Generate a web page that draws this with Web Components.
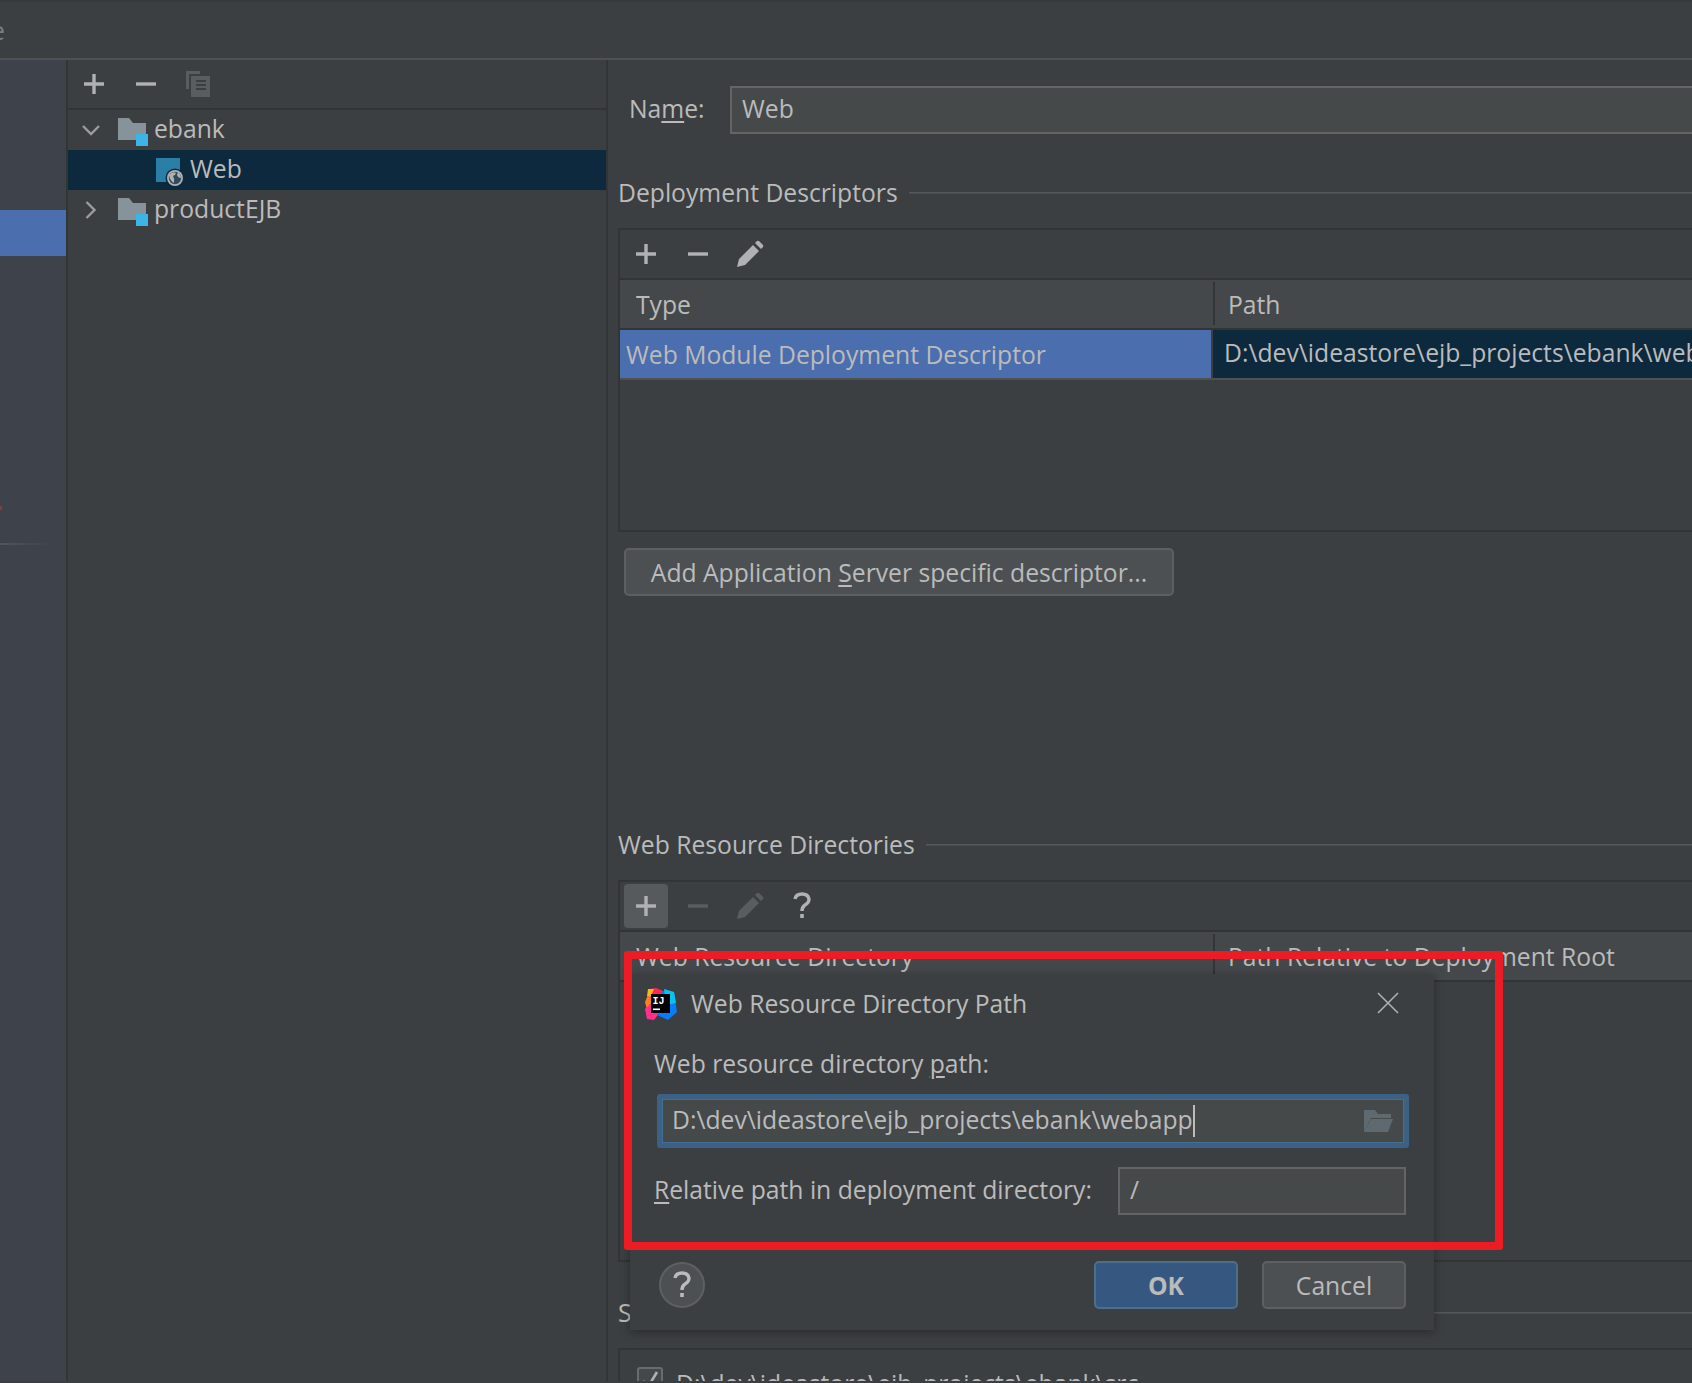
<!DOCTYPE html>
<html>
<head>
<meta charset="utf-8">
<title>Project Structure</title>
<style>
html,body{margin:0;padding:0;background:#3c3f41;}
body{font-family:"Open Sans","Noto Sans",sans-serif;font-size:24.7px;color:#bbbbbb;}
u{text-underline-offset:3px;text-decoration-thickness:2px;}
</style>
</head>
<body>

<ide-window>
  <span slot="title">e</span>

  <tree-panel slot="tree">
    <tool-bar slot="tools">
      <icon-btn name="plus"></icon-btn>
      <icon-btn name="minus"></icon-btn>
      <icon-btn name="copy"></icon-btn>
    </tool-bar>
    <tree-row arrow="down" icon="module">ebank</tree-row>
    <tree-row icon="web" level="1" selected>Web</tree-row>
    <tree-row arrow="right" icon="module">productEJB</tree-row>
  </tree-panel>

  <div slot="main">
    <name-row><span slot="label">Na<u>m</u>e:</span>Web</name-row>

    <group-title style="margin-top:43px">Deployment Descriptors</group-title>
    <data-panel style="margin-top:21px;height:304px">
      <tool-bar slot="tools">
        <icon-btn name="plus"></icon-btn>
        <icon-btn name="minus"></icon-btn>
        <icon-btn name="pencil"></icon-btn>
      </tool-bar>
      <table-head><span slot="a">Type</span><span slot="b">Path</span></table-head>
      <table-row><span slot="a">Web Module Deployment Descriptor</span><span slot="b">D:\dev\ideastore\ejb_projects\ebank\web</span></table-row>
    </data-panel>
    <ide-button style="margin:16px 0 0 6px;width:550px">Add Application <u>S</u>erver specific descriptor...</ide-button>

    <group-title style="margin-top:233px">Web Resource Directories</group-title>
    <data-panel style="margin-top:21px;height:382px">
      <tool-bar slot="tools">
        <icon-btn name="plus" active></icon-btn>
        <icon-btn name="minus" disabled></icon-btn>
        <icon-btn name="pencil" disabled></icon-btn>
        <icon-btn name="help"></icon-btn>
      </tool-bar>
      <table-head><span slot="a">Web Resource Directory</span><span slot="b">Path Relative to Deployment Root</span></table-head>
    </data-panel>

    <group-title style="margin-top:35px">Source Roots</group-title>
    <data-panel style="margin-top:21px;height:80px">
      <check-row>D:\dev\ideastore\ejb_projects\ebank\src</check-row>
    </data-panel>
  </div>

  <dialog-box slot="overlay">
    <span slot="title">Web Resource Directory Path</span>
    <field-label>Web resource directory <u>p</u>ath:</field-label>
    <path-field>D:\dev\ideastore\ejb_projects\ebank\webapp</path-field>
    <relative-row><span slot="label"><u>R</u>elative path in deployment directory:</span>/</relative-row>
    <ide-button slot="footer" primary style="width:144px">OK</ide-button>
    <ide-button slot="footer" style="width:144px">Cancel</ide-button>
  </dialog-box>

  <red-mark slot="overlay"></red-mark>
</ide-window>

<script>
// all the icons in one place
const ICONS = {
  plus: '<svg width="24" height="24" viewBox="0 0 24 24"><path d="M12 2v20M2 12h20" stroke="currentColor" stroke-width="3.4" fill="none"/></svg>',
  minus: '<svg width="24" height="24" viewBox="0 0 24 24"><path d="M2 12h20" stroke="currentColor" stroke-width="3.4" fill="none"/></svg>',
  copy: '<svg width="26" height="28" viewBox="0 0 26 28"><path d="M1 1h14v3H4v15H1z" fill="#5a5d5f"/><path d="M6 6h19v21H6z" fill="#5a5d5f"/><path d="M11 11h10M11 15h10M11 19h10" stroke="#3c3f41" stroke-width="2"/></svg>',
  pencil: '<svg width="28" height="28" viewBox="0 0 28 28"><path d="M1 27l2-8L17 5l6 6L9 25zM19 3l2-2q1-.5 2 0l4 4q.5 1 0 2l-2 2z" fill="currentColor"/></svg>',
  help: '<svg width="24" height="30" viewBox="0 0 24 30"><path d="M5 8q1-5 7-5t7 5q0 4-4 6-3 2-3 6" stroke="currentColor" stroke-width="3.4" fill="none"/><rect x="10.2" y="23" width="3.6" height="4" fill="currentColor"/></svg>',
  down: '<svg width="20" height="20" viewBox="0 0 20 20"><path d="M2 6l8 8 8-8" stroke="#9a9c9e" stroke-width="2.4" fill="none"/></svg>',
  right: '<svg width="20" height="20" viewBox="0 0 20 20"><path d="M5.5 2l8 8-8 8" stroke="#9a9c9e" stroke-width="2.4" fill="none"/></svg>',
  module: '<svg width="31" height="29" viewBox="0 0 31 29"><path d="M0 0h11l4 5h13v17H18v6H0z" fill="#87939a"/><rect x="0" y="22" width="18" height="7" fill="var(--row-bg,#3c3f41)"/><rect x="18" y="16" width="12" height="12" fill="#3cb4e7"/></svg>',
  web: '<svg width="31" height="30" viewBox="0 0 31 30"><rect x="1" y="0" width="24" height="24" fill="#2b7ea5"/><circle cx="20" cy="20" r="9.5" fill="#0d293e"/><circle cx="20" cy="20" r="8" fill="#afb1b3"/><circle cx="20" cy="20" r="6.2" fill="#2f4a5e"/><path d="M14 17q4-4 7-2-1 3-3 3 2 3 1 7-4-2-5-8zM23 14q3 2 3 6-3 0-4-3z" fill="#afb1b3"/></svg>',
  logo: '<svg width="33" height="33" viewBox="0 0 33 33"><path d="M1 14L6 2l8 1-2 14-9 5z" fill="#fc801d"/><path d="M6 1l6-1 7 3-1 9L7 12z" fill="#fe2857"/><path d="M4 1l6 0-3 7-4 0z" fill="#fdb60d"/><path d="M1 21l6-6 9 9-6 8-7-1z" fill="#ff318c"/><path d="M18 3l12 1 3 20-9 8-11-5z" fill="#087cfa"/><path d="M20 1l10 3 2 11-10 2z" fill="#07c3f2"/><rect x="7" y="6" width="19" height="19" fill="#000"/><text x="8.5" y="16" font-family="Liberation Mono,monospace" font-size="10" font-weight="700" fill="#fff">IJ</text><rect x="9" y="20.5" width="7" height="1.6" fill="#fff"/></svg>',
  folder: '<svg width="31" height="24" viewBox="0 0 31 24"><path d="M1 23V1h11l3 4h13v4H8z" fill="#5e6a70"/><path d="M8 10h22l-5 13H1z" fill="#5e6a70"/></svg>',
  close: '<svg width="22" height="22" viewBox="0 0 22 22"><path d="M1 1l20 20M21 1L1 21" stroke="#aeb0b2" stroke-width="1.6" fill="none"/></svg>',
  check: '<svg width="20" height="20" viewBox="0 0 20 20"><path d="M3 11l5 6L17 2" stroke="#afb1b3" stroke-width="2.6" fill="none"/></svg>'
};

// small helper so the classes stay short
function define(tag, html, extra) {
  const template = document.createElement('template');
  template.innerHTML = html;
  class Base extends HTMLElement {
    constructor() {
      super();
      this.attachShadow({ mode: 'open' });
      this.shadowRoot.appendChild(template.content.cloneNode(true));
    }
    connectedCallback() {
      if (extra) extra.call(this);
    }
  }
  customElements.define(tag, Base);
}

define('ide-window', `
<style>
:host{display:block;position:relative;width:1692px;height:1383px;overflow:hidden;background:#3c3f41;}
.top{height:56px;border-top:2px solid #36383a;border-bottom:2px solid #4e5052;box-sizing:content-box;display:flex;align-items:center;color:#7c7e80;}
.top ::slotted(*){margin-left:-9px;}
.cols{display:grid;grid-template-columns:66px 2px 538px 2px 1fr;height:1321px;}
.side{background:#3e434b;position:relative;}
.side .sel{margin-top:150px;height:46px;background:#4b6eaf;}
.side .dot{position:absolute;left:0;top:446px;width:2px;height:4px;background:#8a3a40;}
.side .tick{margin-top:287px;width:50px;height:2px;background:linear-gradient(90deg,#54555a,#3e434b);}
.line{background:#323436;}
.main{padding-left:10px;min-width:0;overflow:hidden;}
</style>
<div class="top"><slot name="title"></slot></div>
<div class="cols">
  <div class="side"><div class="sel"></div><div class="dot"></div><div class="tick"></div></div>
  <div class="line"></div>
  <div><slot name="tree"></slot></div>
  <div class="line"></div>
  <div class="main"><slot name="main"></slot></div>
</div>
<slot name="overlay"></slot>
`);

define('tool-bar', `
<style>
:host{display:flex;align-items:center;gap:8px;height:48px;padding-left:4px;}
</style>
<slot></slot>
`);

define('icon-btn', `
<style>
:host{display:flex;align-items:center;justify-content:center;width:44px;height:44px;border-radius:4px;color:#afb1b3;}
:host([active]){background:#565a5d;}
:host([disabled]){color:#5a5d5f;}
</style>
<span id="i" style="display:flex"></span>
`, function () {
  this.shadowRoot.getElementById('i').innerHTML = ICONS[this.getAttribute('name')];
});

define('tree-panel', `
<style>
:host{display:block;}
.t{border-bottom:2px solid #323436;}
</style>
<div class="t"><slot name="tools"></slot></div>
<slot></slot>
`);

define('tree-row', `
<style>
:host{display:flex;align-items:center;height:40px;color:#bbb;}
:host([selected]){background:#0d293e;--row-bg:#0d293e;}
.arrow{width:20px;height:20px;margin-left:13px;margin-right:17px;flex:none;display:flex;}
.icon{display:flex;flex:none;margin:5px 5px 0 0;}
.txt{margin-bottom:3px;white-space:nowrap;}
:host([level]) .arrow{margin-right:54px;}
:host([level]) .icon{margin-right:4px;}
</style>
<span class="arrow" id="a"></span><span class="icon" id="i"></span><span class="txt"><slot></slot></span>
`, function () {
  const arrow = this.getAttribute('arrow');
  if (arrow) this.shadowRoot.getElementById('a').innerHTML = ICONS[arrow];
  this.shadowRoot.getElementById('i').innerHTML = ICONS[this.getAttribute('icon')];
});

define('name-row', `
<style>
:host{display:flex;align-items:center;margin:26px -20px 0 11px;height:48px;}
.l{width:101px;flex:none;padding-bottom:4px;}
.f{flex:1;background:#45494a;border:2px solid #646464;display:flex;align-items:center;padding:0 0 4px 10px;box-sizing:content-box;height:40px;}
</style>
<span class="l"><slot name="label"></slot></span>
<div class="f"><slot></slot></div>
`);

define('group-title', `
<style>
:host{display:flex;align-items:center;height:30px;white-space:nowrap;}
i{flex:1;height:1px;background:#55585a;margin:2px 0 0 11px;border-bottom:1px solid #4a4c4e;}
</style>
<slot></slot><i></i>
`);

define('data-panel', `
<style>
:host{display:block;box-sizing:border-box;border:2px solid #323436;border-right:0;overflow:hidden;}
.t{border-bottom:2px solid #323436;}
.t.none{display:none;}
</style>
<div class="t" id="t"><slot name="tools"></slot></div>
<slot></slot>
`, function () {
  if (!this.querySelector('[slot=tools]')) this.shadowRoot.getElementById('t').className = 't none';
});

define('table-head', `
<style>
:host{display:grid;grid-template-columns:593px 1fr;height:48px;background:#45484a;border-bottom:2px solid #323436;}
div{display:flex;align-items:center;padding-left:16px;white-space:nowrap;}
.b{position:relative;padding-left:15px;}
.b::before{content:"";position:absolute;left:0;top:2px;bottom:3px;width:2px;background:#323436;}
</style>
<div><slot name="a"></slot></div>
<div class="b"><slot name="b"></slot></div>
`);

define('table-row', `
<style>
:host{display:grid;grid-template-columns:591px 2px 1fr;height:48px;border-bottom:2px solid #4e5052;}
.a{background:#4b6eaf;display:flex;align-items:center;padding-left:6px;white-space:nowrap;}
.gap{background:#3c3f41;}
.b{background:#0d293e;display:flex;align-items:center;padding-left:11px;padding-bottom:4px;white-space:nowrap;overflow:hidden;}
</style>
<div class="a"><slot name="a"></slot></div><div class="gap"></div>
<div class="b"><slot name="b"></slot></div>
`);

define('ide-button', `
<style>
:host{display:flex;align-items:center;justify-content:center;box-sizing:border-box;height:48px;border:2px solid #5e6060;border-radius:5px;background:#4c5052;white-space:nowrap;}
:host([primary]){background:#365880;border-color:#4c708c;font-weight:700;}
</style>
<span><slot></slot></span>
`);

define('check-row', `
<style>
:host{display:flex;align-items:flex-start;padding:17px 0 0 17px;}
.box{width:22px;height:22px;border:2px solid #6b6b6b;border-radius:3px;background:#43494a;margin-right:13px;flex:none;display:flex;align-items:center;justify-content:center;}
span{line-height:34px;white-space:nowrap;}
</style>
<div class="box" id="b"></div><span><slot></slot></span>
`, function () {
  this.shadowRoot.getElementById('b').innerHTML = ICONS.check;
});

define('dialog-box', `
<style>
:host{position:absolute;left:630px;top:974px;width:804px;height:356px;background:#3c3f41;box-shadow:0 2px 9px rgba(0,0,0,.35);display:flex;flex-direction:column;}
.head{display:flex;align-items:center;height:60px;padding:0 35px 0 14px;flex:none;}
.logo{display:flex;margin-right:14px;}
.head .t{flex:1;padding-bottom:2px;}
.x{display:flex;margin-bottom:2px;}
.body{padding:0 28px 0 24px;flex:1;}
.foot{display:flex;align-items:center;gap:24px;padding:0 28px 21px 29px;}
.help{width:42px;height:42px;margin-right:auto;border:2px solid #5e6060;border-radius:50%;background:#4c5052;display:flex;align-items:center;justify-content:center;color:#b9bbbd;}
</style>
<div class="head"><span class="logo" id="l"></span><span class="t"><slot name="title"></slot></span><span class="x" id="x"></span></div>
<div class="body"><slot></slot></div>
<div class="foot"><div class="help" id="h"></div><slot name="footer"></slot></div>
`, function () {
  this.shadowRoot.getElementById('l').innerHTML = ICONS.logo;
  this.shadowRoot.getElementById('x').innerHTML = ICONS.close;
  this.shadowRoot.getElementById('h').innerHTML = ICONS.help;
});

define('field-label', `
<style>
:host{display:block;height:40px;line-height:40px;margin-top:10px;white-space:nowrap;}
</style>
<slot></slot>
`);

define('path-field', `
<style>
:host{display:flex;align-items:center;box-sizing:border-box;height:54px;margin:10px -3px 0 3px;background:#45494a;border:6px solid #3d6185;border-radius:3px;outline:1px solid #466d94;outline-offset:-6px;padding:0 9px 0 9px;white-space:nowrap;}
.v{padding-bottom:4px;}
.caret{display:inline-block;width:2px;height:32px;background:#bbb;margin-left:0;flex:none;}
.grow{flex:1;}
.ic{display:flex;}
</style>
<span class="v"><slot></slot></span><span class="caret"></span><span class="grow"></span><span class="ic" id="i"></span>
`, function () {
  this.shadowRoot.getElementById('i').innerHTML = ICONS.folder;
});

define('relative-row', `
<style>
:host{display:flex;align-items:center;margin-top:19px;height:48px;}
.l{width:464px;flex:none;white-space:nowrap;padding-bottom:4px;}
.f{flex:1;box-sizing:border-box;height:48px;background:#45494a;border:2px solid #646464;display:flex;align-items:center;padding:0 0 4px 10px;}
</style>
<span class="l"><slot name="label"></slot></span>
<div class="f"><slot></slot></div>
`);

define('red-mark', `
<style>
:host{position:absolute;left:624px;top:951px;width:879px;height:299px;box-sizing:border-box;border:8px solid #ed1c24;border-radius:3px;}
</style>
`);
</script>
</body>
</html>
